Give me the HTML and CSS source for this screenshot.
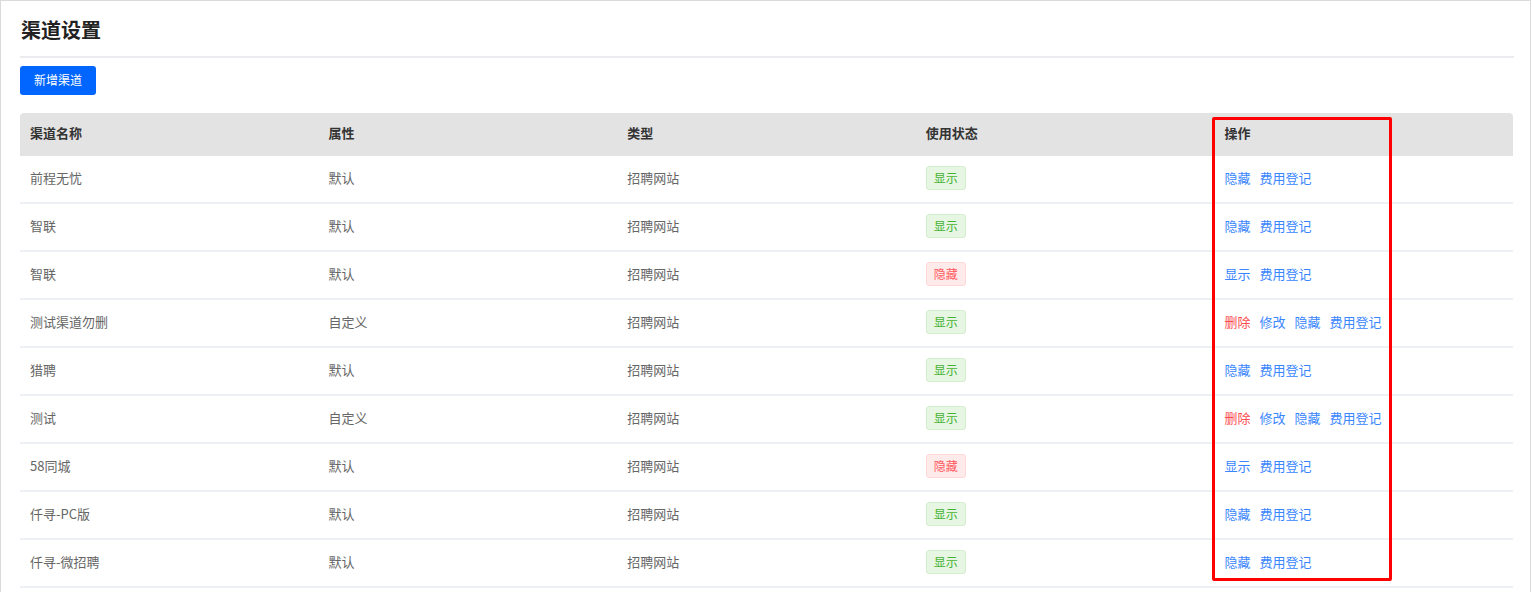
FILE: index.html
```html
<!DOCTYPE html>
<html lang="zh-cmn-Hans">
<head>
    <meta charset="UTF-8">

    <title>渠道设置</title>

    <link rel="stylesheet" href="styles.css">
</head>
<body>
    <div id="page" class="page">
        <h2 class="page-title">渠道设置</h2>
        <div class="toolbar">
            <a class="btn btn-primary" href="javascript:;">新增渠道</a>
        </div>
        <table class="channel-table">
            <thead>
                <tr>
                    <th>渠道名称</th>
                    <th>属性</th>
                    <th>类型</th>
                    <th>使用状态</th>
                    <th>操作</th>
                </tr>
            </thead>
            <tbody>
                <tr>
                    <td>前程无忧</td><td>默认</td><td>招聘网站</td>
                    <td><span class="tag tag-show">显示</span></td>
                    <td><a class="op" href="javascript:;">隐藏</a><a class="op" href="javascript:;">费用登记</a></td>
                </tr>
                <tr>
                    <td>智联</td><td>默认</td><td>招聘网站</td>
                    <td><span class="tag tag-show">显示</span></td>
                    <td><a class="op" href="javascript:;">隐藏</a><a class="op" href="javascript:;">费用登记</a></td>
                </tr>
                <tr>
                    <td>智联</td><td>默认</td><td>招聘网站</td>
                    <td><span class="tag tag-hide">隐藏</span></td>
                    <td><a class="op" href="javascript:;">显示</a><a class="op" href="javascript:;">费用登记</a></td>
                </tr>
                <tr>
                    <td>测试渠道勿删</td><td>自定义</td><td>招聘网站</td>
                    <td><span class="tag tag-show">显示</span></td>
                    <td><a class="op op-danger" href="javascript:;">删除</a><a class="op" href="javascript:;">修改</a><a class="op" href="javascript:;">隐藏</a><a class="op" href="javascript:;">费用登记</a></td>
                </tr>
                <tr>
                    <td>猎聘</td><td>默认</td><td>招聘网站</td>
                    <td><span class="tag tag-show">显示</span></td>
                    <td><a class="op" href="javascript:;">隐藏</a><a class="op" href="javascript:;">费用登记</a></td>
                </tr>
                <tr>
                    <td>测试</td><td>自定义</td><td>招聘网站</td>
                    <td><span class="tag tag-show">显示</span></td>
                    <td><a class="op op-danger" href="javascript:;">删除</a><a class="op" href="javascript:;">修改</a><a class="op" href="javascript:;">隐藏</a><a class="op" href="javascript:;">费用登记</a></td>
                </tr>
                <tr>
                    <td>58同城</td><td>默认</td><td>招聘网站</td>
                    <td><span class="tag tag-hide">隐藏</span></td>
                    <td><a class="op" href="javascript:;">显示</a><a class="op" href="javascript:;">费用登记</a></td>
                </tr>
                <tr>
                    <td>仟寻-PC版</td><td>默认</td><td>招聘网站</td>
                    <td><span class="tag tag-show">显示</span></td>
                    <td><a class="op" href="javascript:;">隐藏</a><a class="op" href="javascript:;">费用登记</a></td>
                </tr>
                <tr>
                    <td>仟寻-微招聘</td><td>默认</td><td>招聘网站</td>
                    <td><span class="tag tag-show">显示</span></td>
                    <td><a class="op" href="javascript:;">隐藏</a><a class="op" href="javascript:;">费用登记</a></td>
                </tr>
            </tbody>
        </table>
        <!-- 操作列高亮框 -->
        <div class="mark-box"></div>
    </div>
</body>
</html>
```

FILE: styles.css
```css
html,body{
    margin: 0;
    background-color: #fff;
    font-family: "Noto Sans CJK SC", "Liberation Sans", sans-serif;
    font-size: 13px;
    color: #666;
}
.page{
    position: relative;
    width: 1494px;
    height: 600px;
    padding: 0 16px 0 19px;
    border: 1px solid #dadada;
    border-bottom: none;
    overflow: hidden;
}
.page-title{
    margin: 0;
    padding: 15px 0 12px 1px;
    height: 28px;
    line-height: 28px;
    font-size: 20px;
    font-weight: bold;
    color: #222;
    border-bottom: 2px solid #ebebf0;
}
.toolbar{
    display: flex;
    padding-top: 8px;
}
.btn{
    display: inline-block;
    height: 27px;
    line-height: 27px;
    padding: 0 14px 2px;
    border-radius: 3px;
    font-size: 12px;
    text-decoration: none;
}
.btn-primary{
    background-color: #0066ff;
    color: #fff;
}
.channel-table{
    width: 1493px;
    margin-top: 18px;
    border-collapse: collapse;
    table-layout: fixed;
}
.channel-table th{
    height: 39px;
    padding: 0 10px 4px;
    text-align: left;
    font-weight: bold;
    color: #333;
    background-color: #e3e3e3;
}
.channel-table th:first-child{
    border-top-left-radius: 4px;
}
.channel-table th:last-child{
    border-top-right-radius: 4px;
}
.channel-table td{
    height: 42px;
    padding: 0 10px 4px;
    border-bottom: 2px solid #edf0f4;
    white-space: nowrap;
}
.tag{
    display: inline-block;
    height: 22px;
    line-height: 22px;
    padding: 0 7px;
    border: 1px solid;
    border-radius: 3px;
    font-size: 12px;
    vertical-align: -3px;
}
.tag-show{
    color: #45b232;
    background-color: #e6f6e2;
    border-color: #d3efcc;
}
.tag-hide{
    color: #ff5a5f;
    background-color: #ffeaea;
    border-color: #ffd9d9;
}
.op{
    margin-right: 9px;
    color: #3a86ff;
    text-decoration: none;
}
.op-danger{
    color: #ff4d4f;
}
.mark-box{
    position: absolute;
    top: 116px;
    left: 1211px;
    width: 174px;
    height: 458px;
    border: 3px solid #ff0000;
    border-radius: 2px;
}
```
